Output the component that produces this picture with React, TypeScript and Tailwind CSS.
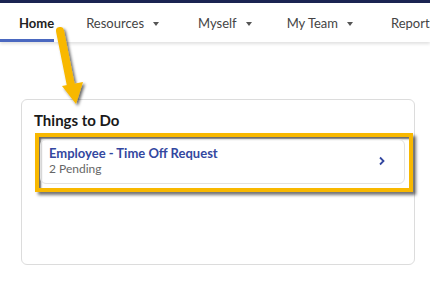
import React from 'react';

function Caret() {
  return <span className="ml-[9px] inline-block border-x-[3px] border-t-[4px] border-x-transparent border-t-[#555] align-middle" />;
}

export default function App() {
  return (
    <div className="relative h-[304px] w-[430px] overflow-hidden bg-white font-['Lato',sans-serif]">
      <div className="h-[3px] bg-[#1b2452]" />
      <nav className="relative flex h-[39px] items-end whitespace-nowrap text-[13px] text-[#444] shadow-[0_2px_3px_rgba(0,0,0,0.12)]">
        <div className="flex h-full w-[58px] items-center border-b-[3px] border-[#4a68c0] pl-[19px] pt-[6px] font-bold text-[#222]">
          Home
        </div>
        <div className="flex h-full items-center pl-[32px] pt-[3px]">Resources<Caret /></div>
        <div className="flex h-full items-center pl-[39px] pt-[3px]">Myself<Caret /></div>
        <div className="flex h-full items-center pl-[35px] pt-[3px]">My Team<Caret /></div>
        <div className="flex h-full items-center pl-[38px] pt-[3px]">Reports</div>
      </nav>

      <section className="ml-[21px] mr-[15px] mt-[57px] h-[166px] rounded-[6px] border border-[#dcdcdc] pt-[9px]">
        <h2 className="pl-[12px] text-[15px] font-bold text-[#1a1a1a]">Things to Do</h2>
        <div className="ml-[13px] mr-[1px] mt-[1px] border-4 border-[#f8b800] pb-[4px] pl-[1px] pr-[4px] pt-[2px] shadow-[3px_3px_3px_rgba(0,0,0,0.55),inset_2px_2px_2px_rgba(0,0,0,0.6)]">
          <div className="flex h-[45px] items-center justify-between rounded-[6px] border border-[#e2e2e2] pl-[8px] pr-[18px]">
            <div className="leading-[16px]">
              <div className="text-[13px] font-bold text-[#3347a0]">Employee - Time Off Request</div>
              <div className="text-[12px] text-[#666]">2 Pending</div>
            </div>
            <svg width="8" height="10" viewBox="0 0 8 10">
              <path d="M2 1.5 L5.5 5 L2 8.5" fill="none" stroke="#3347a0" strokeWidth="1.8" />
            </svg>
          </div>
        </div>
      </section>

      <svg className="absolute left-0 top-0" width="430" height="304">
        <defs>
          <filter id="sh" x="-50%" y="-50%" width="200%" height="200%">
            <feDropShadow dx="2" dy="2" stdDeviation="1.5" floodColor="#000" floodOpacity="0.6" />
          </filter>
        </defs>
        <g filter="url(#sh)">
          <line x1="60" y1="31" x2="71" y2="86" stroke="#f8b800" strokeWidth="8" strokeLinecap="round" />
          <polygon points="62,86 83,82 76,104" fill="#f8b800" />
        </g>
      </svg>
    </div>
  );
}
